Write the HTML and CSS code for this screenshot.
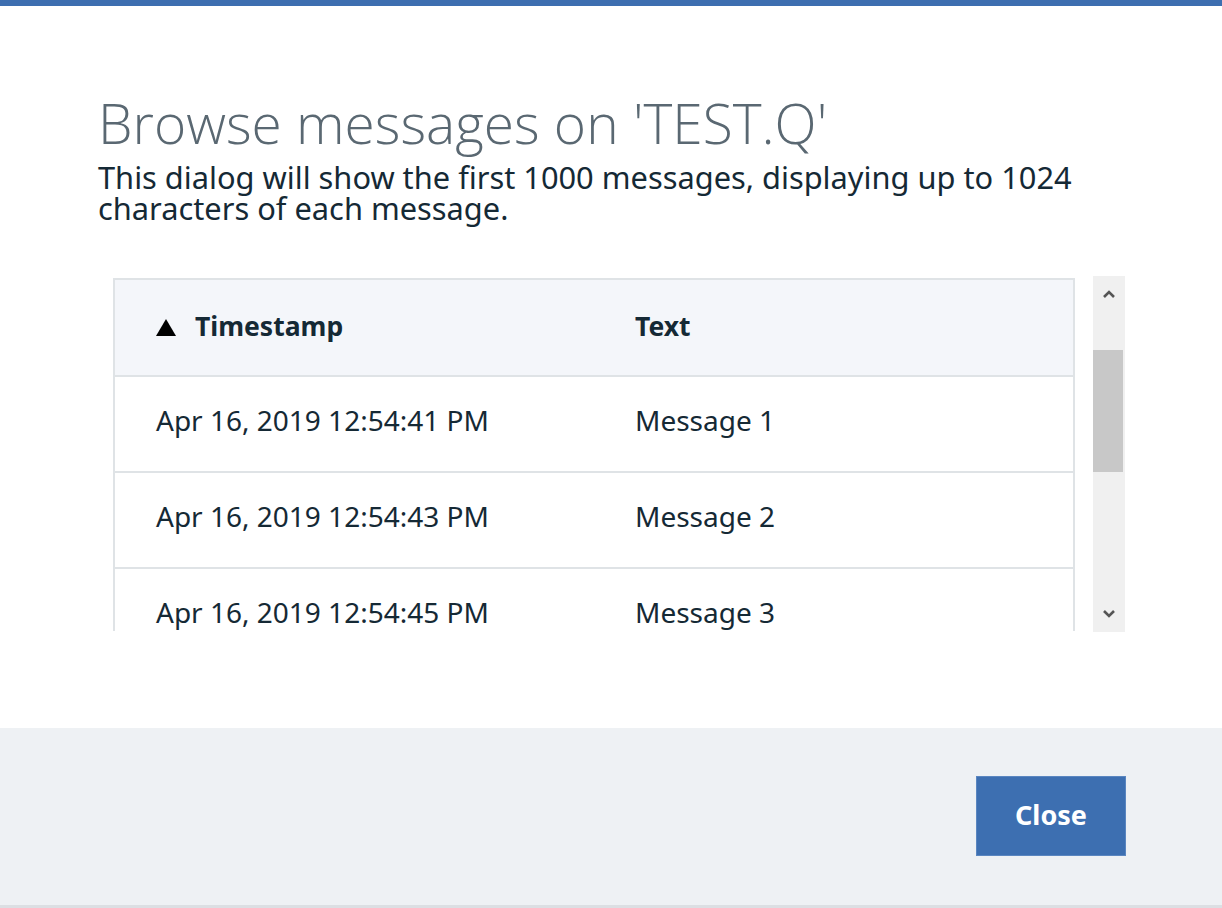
FILE: index.html
```html
<!DOCTYPE html>
<html>
<head>
<meta charset="utf-8">
<link rel="stylesheet" href="styles.css">
</head>
<body>
<div class="modal">
  <div class="top-bar"></div>
  <div class="modal-body">
    <h1 class="title">Browse messages on 'TEST.Q'</h1>
    <p class="subtitle">This dialog will show the first 1000 messages, displaying up to 1024 characters of each message.</p>
    <div class="table-area">
      <div class="table-clip">
        <table class="msg-table">
          <thead>
            <tr>
              <th><span class="th-inner"><svg class="sort" width="20" height="17" viewBox="0 0 20 17"><path d="M10 0 L20 17 L0 17 Z" fill="#000"/></svg>Timestamp</span></th>
              <th>Text</th>
            </tr>
          </thead>
          <tbody>
            <tr><td>Apr 16, 2019 12:54:41 PM</td><td>Message 1</td></tr>
            <tr><td>Apr 16, 2019 12:54:43 PM</td><td>Message 2</td></tr>
            <tr><td>Apr 16, 2019 12:54:45 PM</td><td>Message 3</td></tr>
          </tbody>
        </table>
      </div>
      <div class="scrollbar">
        <div class="sb-btn">
          <svg width="14" height="10" viewBox="0 0 14 10"><path d="M2 8 L7 3 L12 8" fill="none" stroke="#555" stroke-width="2.6"/></svg>
        </div>
        <div class="sb-track"><div class="sb-thumb"></div></div>
        <div class="sb-btn">
          <svg width="14" height="10" viewBox="0 0 14 10"><path d="M2 2 L7 7 L12 2" fill="none" stroke="#555" stroke-width="2.6"/></svg>
        </div>
      </div>
    </div>
  </div>
  <div class="modal-footer">
    <button class="btn-close">Close</button>
  </div>
</div>
</body>
</html>
```
FILE: styles.css
```css
html, body {
  margin: 0;
  padding: 0;
  background: #ffffff;
}
body {
  font-family: "Noto Sans", "Open Sans", sans-serif;
  color: #152935;
}
.modal {
  width: 1222px;
  height: 908px;
  display: flex;
  flex-direction: column;
  background: #ffffff;
  overflow: hidden;
}
.top-bar {
  height: 6px;
  background: #3d6eb0;
  flex: none;
}
.modal-body {
  height: 722px;
  flex: none;
  padding: 0 0 0 98px;
  box-sizing: border-box;
}
.title {
  margin: 82px 0 0 0;
  font-family: "Open Sans", sans-serif;
  font-weight: 300;
  font-size: 55px;
  line-height: 70px;
  color: #5a6872;
  letter-spacing: 0;
}
.subtitle {
  margin: 4px 0 0 0;
  width: 1050px;
  font-size: 30.8px;
  line-height: 31px;
  color: #152935;
}
.table-area {
  margin: 54px 0 0 15px;
  display: flex;
  align-items: flex-start;
  gap: 18px;
}
.table-clip {
  width: 962px;
  height: 353px;
  overflow: hidden;
}
.msg-table {
  width: 962px;
  border-collapse: collapse;
  table-layout: fixed;
  border-left: 2px solid #dfe3e6;
  border-right: 2px solid #dfe3e6;
}
.msg-table th,
.msg-table td {
  border-top: 2px solid #dfe3e6;
  border-bottom: 2px solid #dfe3e6;
  text-align: left;
  padding: 0 0 8px 41px;
  height: 96px;
  box-sizing: border-box;
  font-size: 28px;
  color: #152935;
  white-space: nowrap;
}
.msg-table th {
  background: #f4f6fa;
  font-weight: 700;
  font-size: 26.5px;
  height: 97px;
  padding-bottom: 4px;
}
.msg-table td {
  font-weight: 400;
}
.th-inner {
  display: inline-flex;
  align-items: center;
}
.sort {
  margin-right: 19px;
  flex: none;
  position: relative;
  top: 1px;
}
.scrollbar {
  width: 32px;
  height: 356px;
  margin-top: -2px;
  background: #f0f0f0;
  display: flex;
  flex-direction: column;
}
.sb-btn {
  height: 36px;
  display: flex;
  align-items: center;
  justify-content: center;
  flex: none;
}
.sb-track {
  flex: 1;
}
.sb-thumb {
  margin-top: 38px;
  width: 30px;
  height: 122px;
  background: #c8c8c8;
}
.modal-footer {
  height: 180px;
  flex: none;
  background: #eef1f4;
  border-bottom: 3px solid #dcdfe3;
  display: flex;
  justify-content: flex-end;
  align-items: flex-start;
  padding: 48px 96px 0 0;
  box-sizing: border-box;
}
.btn-close {
  width: 150px;
  height: 80px;
  background: #3d6fb1;
  border: 1px solid #5a86c0;
  color: #ffffff;
  font-family: "Noto Sans", sans-serif;
  font-weight: 700;
  font-size: 27px;
  padding: 0 0 4px 0;
  cursor: pointer;
}
```
